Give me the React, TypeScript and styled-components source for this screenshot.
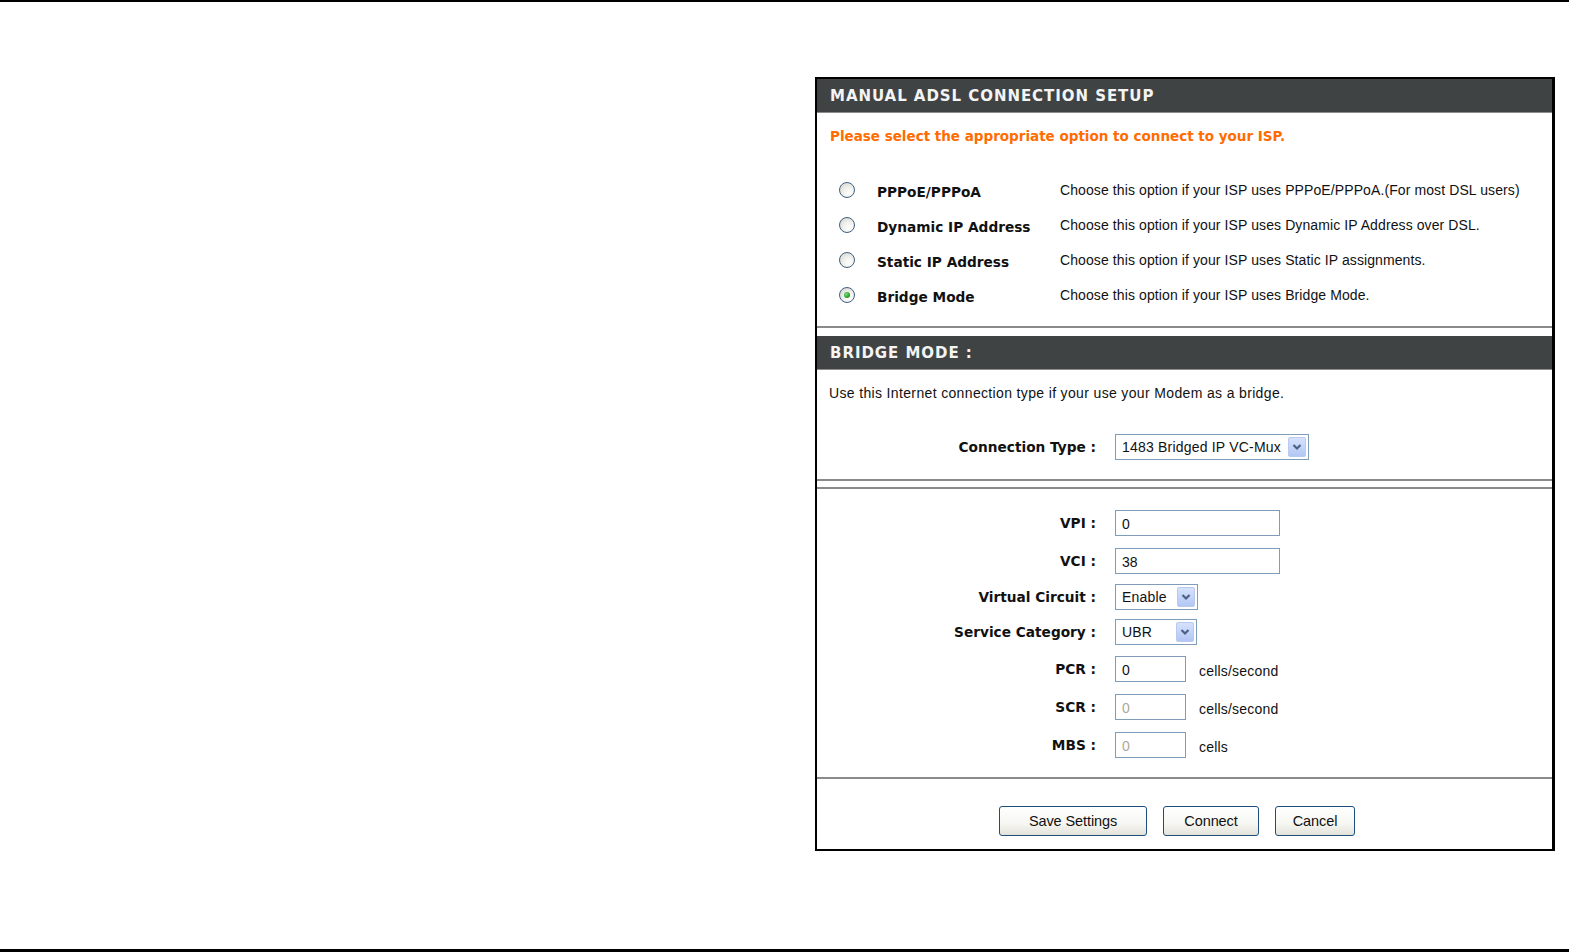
import { createGlobalStyle } from "styled-components";
import styled from "styled-components";

const GlobalStyle = createGlobalStyle`
  html, body {
    margin: 0;
    padding: 0;
    background: #ffffff;
  }
  body {
    font-family: "Liberation Sans", Arial, sans-serif;
    color: #000;
  }
`;

const Page = styled.div`
  height: 952px;
  display: flex;
  flex-direction: column;
`;

const TopRule = styled.div`
  height: 2px;
  background: #000;
`;

const BottomRule = styled.div`
  height: 3px;
  background: #000;
`;

const Main = styled.div`
  flex: 1;
  display: flex;
  justify-content: flex-end;
  align-items: flex-start;
  padding: 75px 14px 0 0;
`;

const Panel = styled.div`
  width: 735px;
  border: 2px solid #000;
  border-right-width: 3px;
  background: #fff;
  display: flex;
  flex-direction: column;
`;

const Header = styled.h2`
  margin: 0;
  height: 33px;
  display: flex;
  align-items: center;
  padding-left: 13px;
  background: #404343;
  border-bottom: 1px solid #8c8c8c;
  color: #f4f4f4;
  font-family: "DejaVu Sans", Verdana, sans-serif;
  font-weight: bold;
  font-size: 15px;
  letter-spacing: 0.95px;
`;

const Box = styled.div<{ $top?: boolean }>`
  border-bottom: 2px solid #8a8a8a;
  border-top: ${(p) => (p.$top ? "2px solid #8a8a8a" : "none")};
`;

const Gap = styled.div<{ $h: number }>`
  height: ${(p) => p.$h}px;
`;

const IntroContent = styled.div`
  padding: 15px 0 14px 0;
`;

const Notice = styled.p`
  margin: 0 0 28px 13px;
  height: 16px;
  line-height: 16px;
  color: #ff6c00;
  font-family: "DejaVu Sans", Verdana, sans-serif;
  font-weight: bold;
  font-size: 13.5px;
`;

const OptionRow = styled.div`
  display: grid;
  grid-template-columns: 60px 183px 1fr;
  align-items: center;
  height: 35px;
`;

const RadioCell = styled.div`
  display: flex;
  justify-content: center;
`;

const Radio = styled.span<{ $on?: boolean }>`
  width: 16px;
  height: 16px;
  box-sizing: border-box;
  border-radius: 50%;
  border: 1px solid #3f5f80;
  background: radial-gradient(circle at 65% 70%, #ffffff 0%, #f1f1ee 40%, #d2d2ca 100%);
  display: flex;
  align-items: center;
  justify-content: center;
  &::after {
    content: "";
    display: ${(p) => (p.$on ? "block" : "none")};
    width: 6px;
    height: 6px;
    border-radius: 50%;
    background: radial-gradient(circle at 35% 35%, #7fe07f 0%, #27a027 60%, #1a7a1a 100%);
  }
`;

const OptionLabel = styled.span`
  font-family: "DejaVu Sans", Verdana, sans-serif;
  font-weight: bold;
  font-size: 13.7px;
  color: #111;
  padding-top: 4px;
`;

const OptionDesc = styled.span`
  font-size: 14px;
  color: #111;
  letter-spacing: 0.1px;
`;

const BridgeContent = styled.div`
  padding: 15px 0 19px 0;
`;

const Text = styled.p`
  margin: 0 0 33px 12px;
  height: 16px;
  line-height: 16px;
  font-size: 14px;
  letter-spacing: 0.35px;
  color: #111;
`;

const FieldRow = styled.div<{ $h: number }>`
  display: grid;
  grid-template-columns: 279px auto 1fr;
  column-gap: 19px;
  align-items: center;
  height: ${(p) => p.$h}px;
`;

const FieldLabel = styled.label`
  text-align: right;
  font-family: "DejaVu Sans", Verdana, sans-serif;
  font-weight: bold;
  font-size: 13.7px;
  color: #111;
`;

const FieldCell = styled.div`
  display: flex;
  align-items: center;
  gap: 13px;
`;

const Input = styled.div<{ $w: number; $disabled?: boolean }>`
  width: ${(p) => p.$w}px;
  height: 26px;
  box-sizing: border-box;
  border: 1px solid #7f9db9;
  padding: 3px 0 0 6px;
  font-size: 14px;
  line-height: 20px;
  color: ${(p) => (p.$disabled ? "#aca899" : "#111")};
  background: #fff;
`;

const Unit = styled.span`
  font-size: 14px;
  letter-spacing: 0.2px;
  color: #111;
  padding-top: 4px;
`;

const Select = styled.div<{ $w: number }>`
  width: ${(p) => p.$w}px;
  height: 26px;
  box-sizing: border-box;
  border: 1px solid #7f9db9;
  display: flex;
  align-items: center;
  justify-content: space-between;
  padding: 2px 2px 2px 6px;
  font-size: 14px;
  letter-spacing: 0.2px;
  color: #111;
  background: #fff;
`;

const Arrow = styled.span`
  width: 18px;
  height: 20px;
  box-sizing: border-box;
  border-radius: 2px;
  border: 1px solid #b9c9ef;
  background: linear-gradient(#d6e2fc, #b2c7f5);
  display: flex;
  align-items: center;
  justify-content: center;
`;

const ParamsContent = styled.div`
  padding: 15px 0 13px 0;
`;

const ButtonBar = styled.div`
  height: 70px;
  display: flex;
  align-items: flex-start;
  justify-content: center;
  gap: 16px;
  padding: 27px 15px 0 0;
  box-sizing: border-box;
`;

const Button = styled.button<{ $w: number }>`
  width: ${(p) => p.$w}px;
  height: 30px;
  border: 1px solid #1d4f7e;
  border-radius: 3px;
  background: linear-gradient(#ffffff 0%, #f6f6f2 60%, #e3e2da 100%);
  font-family: "Liberation Sans", Arial, sans-serif;
  font-size: 14.5px;
  letter-spacing: -0.1px;
  color: #111;
  padding: 0;
`;

const Chevron = () => (
  <svg width="10" height="8" viewBox="0 0 10 8">
    <path d="M1.5 2 L5 5.5 L8.5 2" fill="none" stroke="#4d6185" strokeWidth="2.2" />
  </svg>
);

const options = [
  { label: "PPPoE/PPPoA", desc: "Choose this option if your ISP uses PPPoE/PPPoA.(For most DSL users)" },
  { label: "Dynamic IP Address", desc: "Choose this option if your ISP uses Dynamic IP Address over DSL." },
  { label: "Static IP Address", desc: "Choose this option if your ISP uses Static IP assignments." },
  { label: "Bridge Mode", desc: "Choose this option if your ISP uses Bridge Mode.", on: true },
];

export default function App() {
  return (
    <Page>
      <GlobalStyle />
      <TopRule />
      <Main>
        <Panel>
          <Header>MANUAL ADSL CONNECTION SETUP</Header>
          <Box>
            <IntroContent>
              <Notice>Please select the appropriate option to connect to your ISP.</Notice>
              {options.map((o) => (
                <OptionRow key={o.label}>
                  <RadioCell>
                    <Radio $on={o.on} />
                  </RadioCell>
                  <OptionLabel>{o.label}</OptionLabel>
                  <OptionDesc>{o.desc}</OptionDesc>
                </OptionRow>
              ))}
            </IntroContent>
          </Box>
          <Gap $h={8} />
          <Header>BRIDGE MODE :</Header>
          <Box>
            <BridgeContent>
              <Text>Use this Internet connection type if your use your Modem as a bridge.</Text>
              <FieldRow $h={26}>
                <FieldLabel>Connection Type :</FieldLabel>
                <Select $w={194}>
                  1483 Bridged IP VC-Mux
                  <Arrow>
                    <Chevron />
                  </Arrow>
                </Select>
              </FieldRow>
            </BridgeContent>
          </Box>
          <Gap $h={6} />
          <Box $top>
            <ParamsContent>
              <FieldRow $h={38}>
                <FieldLabel>VPI :</FieldLabel>
                <Input $w={165}>0</Input>
              </FieldRow>
              <FieldRow $h={38}>
                <FieldLabel>VCI :</FieldLabel>
                <Input $w={165}>38</Input>
              </FieldRow>
              <FieldRow $h={34}>
                <FieldLabel>Virtual Circuit :</FieldLabel>
                <Select $w={83}>
                  Enable
                  <Arrow>
                    <Chevron />
                  </Arrow>
                </Select>
              </FieldRow>
              <FieldRow $h={36}>
                <FieldLabel>Service Category :</FieldLabel>
                <Select $w={82}>
                  UBR
                  <Arrow>
                    <Chevron />
                  </Arrow>
                </Select>
              </FieldRow>
              <FieldRow $h={38}>
                <FieldLabel>PCR :</FieldLabel>
                <FieldCell>
                  <Input $w={71}>0</Input>
                  <Unit>cells/second</Unit>
                </FieldCell>
              </FieldRow>
              <FieldRow $h={38}>
                <FieldLabel>SCR :</FieldLabel>
                <FieldCell>
                  <Input $w={71} $disabled>0</Input>
                  <Unit>cells/second</Unit>
                </FieldCell>
              </FieldRow>
              <FieldRow $h={38}>
                <FieldLabel>MBS :</FieldLabel>
                <FieldCell>
                  <Input $w={71} $disabled>0</Input>
                  <Unit>cells</Unit>
                </FieldCell>
              </FieldRow>
            </ParamsContent>
          </Box>
          <ButtonBar>
            <Button $w={148}>Save Settings</Button>
            <Button $w={96}>Connect</Button>
            <Button $w={80}>Cancel</Button>
          </ButtonBar>
        </Panel>
      </Main>
      <BottomRule />
    </Page>
  );
}
